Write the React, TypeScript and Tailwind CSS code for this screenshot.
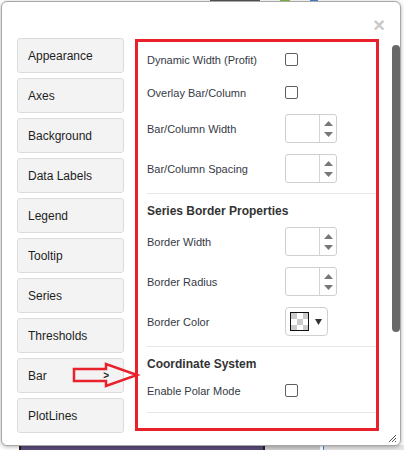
import React from 'react'

const NAV = ['Appearance', 'Axes', 'Background', 'Data Labels', 'Legend', 'Tooltip', 'Series', 'Thresholds', 'Bar', 'PlotLines']

function Checkbox() {
  return <span className="block h-[13px] w-[13px] rounded-[2px] border border-[#5f5f5f] bg-white" />
}

function Spinner() {
  return (
    <div className="flex h-[29px] w-[52px] rounded-[3px] border border-[#cfcfcf] bg-white">
      <div className="flex-1" />
      <div className="flex w-[17px] flex-col items-center justify-center gap-[6px] border-l border-[#d4d4d4]">
        <svg width="9" height="5" viewBox="0 0 9 5"><polygon points="0,5 4.5,0 9,5" fill="#777" /></svg>
        <svg width="9" height="5" viewBox="0 0 9 5"><polygon points="0,0 9,0 4.5,5" fill="#777" /></svg>
      </div>
    </div>
  )
}

function ColorPicker() {
  return (
    <div className="flex h-[29px] w-[43px] items-center gap-[6px] rounded-[4px] border border-[#cfcfcf] bg-white pl-[4px]">
      <svg width="19" height="19" viewBox="0 0 19 19">
        <rect x="0" y="0" width="19" height="19" fill="#fff" />
        <rect x="1" y="1" width="6" height="6" fill="#cbcbcb" />
        <rect x="13" y="1" width="5" height="6" fill="#cbcbcb" />
        <rect x="7" y="7" width="6" height="6" fill="#cbcbcb" />
        <rect x="1" y="13" width="6" height="5" fill="#cbcbcb" />
        <rect x="13" y="13" width="5" height="5" fill="#cbcbcb" />
        <rect x="0.5" y="0.5" width="18" height="18" fill="none" stroke="#111" />
      </svg>
      <svg width="7" height="6" viewBox="0 0 7 6"><polygon points="0,0 7,0 3.5,6" fill="#333" /></svg>
    </div>
  )
}

function Row({ label, children, className = '' }: { label: string; children: React.ReactNode; className?: string }) {
  return (
    <div className={`flex items-center ${className}`}>
      <span className="w-[138px] pt-[2px] text-[11px] leading-[13px] text-[#353a45]">{label}</span>
      {children}
    </div>
  )
}

export default function App() {
  return (
    <div className="relative h-[450px] w-[404px] overflow-hidden bg-white font-['Liberation_Sans',Arial,sans-serif]">
      {/* page behind the dialog */}
      <div className="flex h-full flex-col justify-between">
        <div className="flex h-[3px] gap-[20px] pl-[210px]">
          <span className="w-[50px] bg-[#555]" />
          <span className="w-[10px] bg-[#7fbf3f]" />
          <span className="w-[8px] bg-[#4a7fd0]" />
        </div>
        <div className="flex h-[5px]">
          <span className="ml-[19px] w-[246px] border-x-2 border-[#222] bg-[#5b4a7a]" />
          <span className="w-[55px] bg-[#cfcfcf]" />
          <span className="ml-[3px] w-[1px] bg-[#4a7fd0]" />
          <span className="flex-1 bg-[#e6e6e6]" />
        </div>
      </div>

      <div className="absolute left-[1px] top-[1px] flex h-[445px] w-[400px] flex-col rounded-[6px] border border-[#a8a8a8] bg-white shadow-[0_1px_4px_rgba(0,0,0,0.3)]">
        <div className="flex h-[36px] justify-end pr-[15px] pt-[13px]">
          <span className="text-[20px] font-bold leading-[20px] text-[#c9c9c9]">×</span>
        </div>

        <div className="flex pl-[15px]">
          <nav className="flex w-[107px] flex-col gap-[5px]">
            {NAV.map((n) => (
              <div
                key={n}
                className="flex h-[35px] items-center justify-between rounded-[3px] border border-[#dcdcdc] bg-[#f3f3f3] pl-[10px] pr-[14px] text-[12px] text-[#1e1e1e]"
              >
                <span>{n}</span>
                {n === 'Bar' && <span className="text-[10px] font-bold">&gt;</span>}
              </div>
            ))}
          </nav>

          <section className="ml-[11px] mt-[1px] flex h-[392px] w-[244px] flex-col border-[3px] border-[#e8212b] pl-[9px]">
            <Row label="Dynamic Width (Profit)" className="mt-[11px] h-[13px]"><Checkbox /></Row>
            <Row label="Overlay Bar/Column" className="mt-[20px] h-[13px]"><Checkbox /></Row>
            <Row label="Bar/Column Width" className="mt-[15px] h-[29px]"><Spinner /></Row>
            <Row label="Bar/Column Spacing" className="mt-[11px] h-[29px]"><Spinner /></Row>
            <div className="mt-[10px] h-px bg-[#e6e6e6]" />
            <h3 className="mt-[9px] text-[12px] font-bold leading-[16px] text-[#333]">Series Border Properties</h3>
            <Row label="Border Width" className="mt-[8px] h-[29px]"><Spinner /></Row>
            <Row label="Border Radius" className="mt-[11px] h-[29px]"><Spinner /></Row>
            <Row label="Border Color" className="mt-[11px] h-[29px]"><ColorPicker /></Row>
            <div className="mt-[10px] h-px bg-[#e6e6e6]" />
            <h3 className="mt-[9px] text-[12px] font-bold leading-[16px] text-[#333]">Coordinate System</h3>
            <Row label="Enable Polar Mode" className="mt-[12px] h-[13px]"><Checkbox /></Row>
            <div className="mt-[15px] h-px bg-[#e6e6e6]" />
          </section>

          <div className="ml-[13px] mt-[7px] h-[287px] w-[8px] rounded-full bg-[#686868]" />
        </div>

        <svg className="absolute bottom-[2px] right-[3px]" width="9" height="9" viewBox="0 0 9 9">
          <path d="M8 1L1 8M8 4L4 8M8 7L7 8" stroke="#555" strokeWidth="1" />
        </svg>
      </div>

      <svg className="absolute left-0 top-0" width="150" height="400" viewBox="0 0 150 400">
        <polygon
          points="74,369 106,369 106,364 137,375 106,386 106,381 74,381"
          fill="none"
          stroke="#e8212b"
          strokeWidth="2.5"
        />
      </svg>
    </div>
  )
}
